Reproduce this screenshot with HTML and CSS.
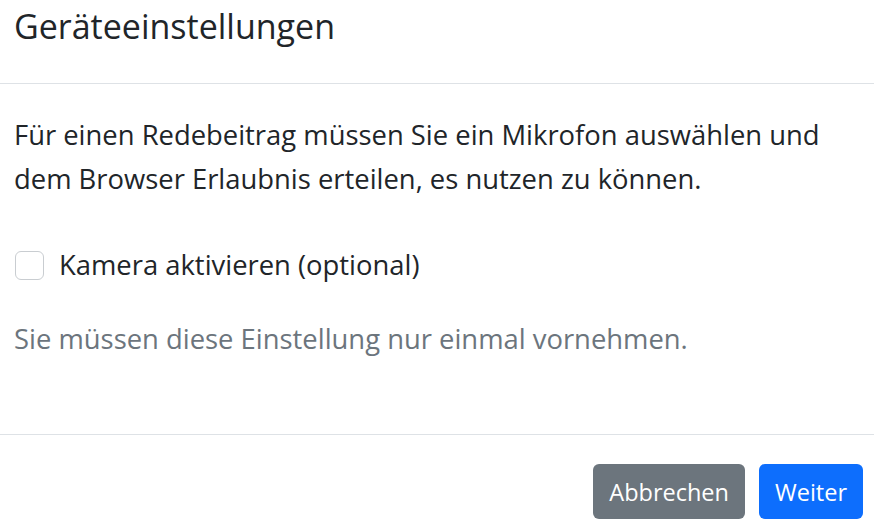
FILE: index.html
```html
<!DOCTYPE html>
<html lang="de">
<head>
<meta charset="utf-8">
<title>Geräteeinstellungen</title>
<link rel="stylesheet" href="styles.css">
</head>
<body>
<div class="modal">
  <div class="modal-header">
    <h5 class="modal-title">Geräteeinstellungen</h5>
  </div>
  <div class="modal-body">
    <p class="intro">Für einen Redebeitrag müssen Sie ein Mikrofon auswählen und dem Browser Erlaubnis erteilen, es nutzen zu können.</p>
    <label class="check">
      <input type="checkbox" class="check-input">
      <span class="check-label">Kamera aktivieren (optional)</span>
    </label>
    <p class="muted">Sie müssen diese Einstellung nur einmal vornehmen.</p>
  </div>
  <div class="modal-footer">
    <button type="button" class="btn btn-secondary">Abbrechen</button>
    <button type="button" class="btn btn-primary">Weiter</button>
  </div>
</div>
</body>
</html>
```
FILE: styles.css
```css
* { box-sizing: border-box; }
html, body { margin: 0; padding: 0; background: #fff; }
body {
  font-family: "Open Sans", "Noto Sans", sans-serif;
  color: #212529;
  width: 874px;
  height: 530px;
  overflow: hidden;
}
.modal { display: flex; flex-direction: column; }
.modal-header {
  padding: 6px 15px 37px 14px;
  border-bottom: 1px solid #dee2e6;
}
.modal-title {
  margin: 0;
  font-size: 34px;
  font-weight: 400;
  line-height: 40px;
}
.modal-body {
  padding: 29px 15px 73px 14px;
  font-size: 27.4px;
  line-height: 44px;
}
.intro { margin: 0 0 42px; }
.check {
  display: flex;
  align-items: center;
  gap: 15px;
  margin-bottom: 30px;
}
.check-input {
  appearance: none;
  -webkit-appearance: none;
  margin: 0 0 0 1px;
  width: 29px;
  height: 29px;
  border: 1px solid #c9cdd1;
  border-radius: 6px;
  background: #fff;
  flex: none;
}
.muted { margin: 0; color: #6c757d; }
.modal-footer {
  display: flex;
  justify-content: flex-end;
  gap: 14px;
  padding: 29px 11px 11px;
  border-top: 1px solid #dee2e6;
}
.btn {
  font-family: inherit;
  font-size: 23.5px;
  line-height: 36px;
  height: 55px;
  padding: 0 16px;
  border: none;
  border-radius: 6px;
  color: #fff;
}
.btn-secondary { background: #6c757d; }
.btn-primary { background: #0d6efd; }
```
